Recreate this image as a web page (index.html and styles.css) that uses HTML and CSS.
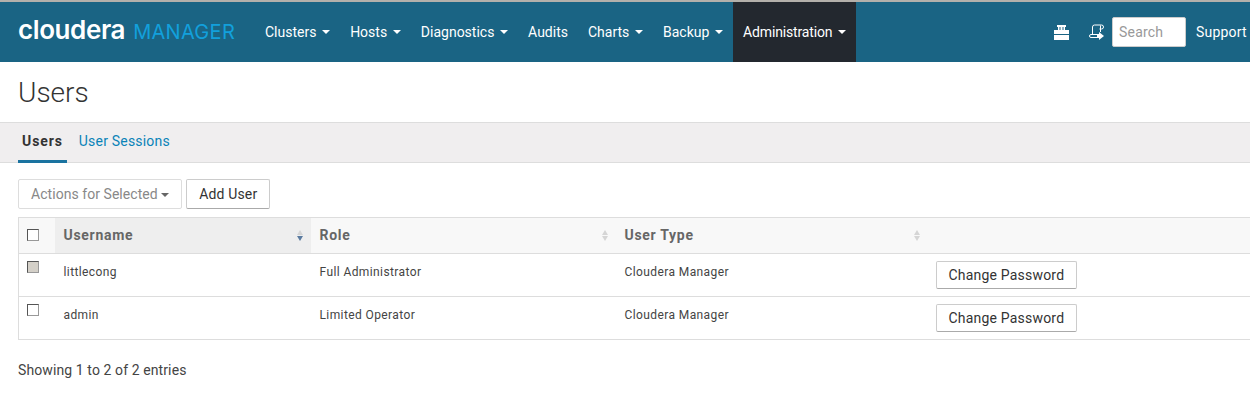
FILE: index.html
```html
<!DOCTYPE html>
<html lang="en">
<head>
    <meta charset="UTF-8">
    <title>Users</title>
    <link rel="stylesheet" href="styles.css">
</head>
<body>

    <nav class="navbar">
        <a class="brand"><span class="brand-name">cloudera</span><span class="brand-product">MANAGER</span></a>
        <ul class="nav-links">
            <li class="nav-item">Clusters <i class="caret"></i></li>
            <li class="nav-item">Hosts <i class="caret"></i></li>
            <li class="nav-item">Diagnostics <i class="caret"></i></li>
            <li class="nav-item">Audits</li>
            <li class="nav-item">Charts <i class="caret"></i></li>
            <li class="nav-item">Backup <i class="caret"></i></li>
            <li class="nav-item active">Administration <i class="caret"></i></li>
        </ul>
        <div class="nav-right">
            <svg class="icon-case" width="15" height="15" viewBox="0 0 15 15">
                <path fill="#fff" d="M3 0h9v2h-1v3h4v4H0V5h4V2H3zM5.500 2v3h1V2zM8.500 2v3h1V2zM0 10h15v5H0z"/>
            </svg>
            <svg class="icon-scroll" width="16" height="16" viewBox="0 0 16 16" fill="none" stroke="#fff">
                <path d="M4.500 10V3a2 2 0 0 1 2-2h7a1.500 1.500 0 0 1 0 4h-2M12.500 1.500V8"/>
                <path d="M3 10.500h7v3H3a1.500 1.500 0 0 1 0-3z"/>
                <path fill="#fff" stroke="none" d="M9 10h2V8l5 4-5 4v-2H9z"/>
            </svg>
            <input class="search" type="text" placeholder="Search">
            <span class="support">Support</span>
        </div>
    </nav>

    <h1 class="page-title">Users</h1>

    <div class="tabs">
        <a class="tab active">Users</a>
        <a class="tab">User Sessions</a>
    </div>

    <div class="content">
        <div class="toolbar">
            <button class="btn disabled">Actions for Selected <i class="caret dark"></i></button>
            <button class="btn">Add User</button>
        </div>

        <table class="users">
            <thead>
                <tr>
                    <th class="col-check"><span class="check"></span></th>
                    <th class="col-name sorted">Username<span class="sort"><i class="up"></i><i class="down on"></i></span></th>
                    <th class="col-role">Role<span class="sort"><i class="up"></i><i class="down"></i></span></th>
                    <th class="col-type">User Type<span class="sort"><i class="up"></i><i class="down"></i></span></th>
                    <th></th>
                </tr>
            </thead>
            <tbody>
                <tr>
                    <td><span class="check locked"></span></td>
                    <td>littlecong</td>
                    <td>Full Administrator</td>
                    <td>Cloudera Manager</td>
                    <td class="col-action"><button class="btn small">Change Password</button></td>
                </tr>
                <tr>
                    <td><span class="check"></span></td>
                    <td>admin</td>
                    <td>Limited Operator</td>
                    <td>Cloudera Manager</td>
                    <td class="col-action"><button class="btn small">Change Password</button></td>
                </tr>
            </tbody>
        </table>

        <p class="info">Showing 1 to 2 of 2 entries</p>
    </div>

</body>
</html>
```

FILE: styles.css
```css
* {
    margin: 0;
    padding: 0;
    box-sizing: border-box;
}

body {
    font-family: Roboto, "Liberation Sans", sans-serif;
    font-size: 13px;
    color: #333;
    background-color: #fff;
    overflow: hidden;
}

/* Barra superior */
.navbar {
    display: flex;
    align-items: stretch;
    height: 62px;
    background-color: #1a6484;
    border-top: 2px solid #b3b0ab;
    color: #fff;
    white-space: nowrap;
}

.brand {
    display: flex;
    align-items: baseline;
    width: 255px;
    padding: 12px 0 0 18px;
}

.brand-name {
    font-family: Inter, sans-serif;
    font-size: 26px;
    font-weight: 600;
    letter-spacing: -0.4px;
}

.brand-product {
    margin-left: 8px;
    font-family: Inter, sans-serif;
    font-size: 20px;
    letter-spacing: 0.3px;
    color: #12a0dc;
}

.nav-links {
    display: flex;
    list-style: none;
}

.nav-item {
    display: flex;
    align-items: center;
    gap: 5.700px;
    padding: 0 10px;
    font-size: 14px;
}

.nav-item.active {
    background-color: #23282f;
    letter-spacing: -0.15px;
}

.caret {
    display: inline-block;
    width: 0;
    height: 0;
    border-top: 4px solid #fff;
    border-left: 4px solid transparent;
    border-right: 4px solid transparent;
}

.caret.dark {
    border-top-color: #666;
    vertical-align: 2px;
}

.nav-right {
    display: flex;
    align-items: center;
    margin-left: auto;
    font-size: 14px;
    letter-spacing: 0.2px;
}

.icon-case {
    margin-right: 19px;
}

.icon-scroll {
    margin-right: 8px;
}

.search {
    width: 74px;
    height: 30px;
    padding: 0 6px;
    margin-right: 10px;
    border: 1px solid #ccc;
    border-radius: 2px;
    font-family: inherit;
    font-size: 14px;
    letter-spacing: 0.2px;
}

.search::placeholder {
    color: #999;
}

.support {
    width: 54px;
    overflow: hidden;
}

.page-title {
    height: 60px;
    padding: 15px 0 0 18px;
    font-size: 28px;
    font-weight: 300;
    line-height: 32px;
}

/* Abas */
.tabs {
    display: flex;
    gap: 12px;
    height: 41px;
    padding-left: 18px;
    background-color: #f0eeef;
    border-top: 1px solid #ddd;
    border-bottom: 1px solid #ddd;
    font-size: 14px;
    letter-spacing: 0.2px;
}

.tab {
    height: 40px;
    padding: 10px 4px 0;
    color: #0a83b8;
}

.tab.active {
    color: #333;
    font-weight: 700;
    letter-spacing: 0.9px;
    border-bottom: 3px solid #1a73a0;
}

.tab + .tab {
    padding-left: 0;
}

.content {
    padding: 16px 0 0 18px;
}

.toolbar {
    display: flex;
    gap: 4px;
    margin-bottom: 8px;
}

.btn {
    height: 30px;
    padding: 0 12px;
    background-color: #fff;
    border: 1px solid #ccc;
    border-bottom-color: #aaa;
    border-radius: 2px;
    font-family: inherit;
    font-size: 14px;
    letter-spacing: 0.15px;
    color: #333;
}

.btn.disabled {
    color: #888;
    letter-spacing: 0.05px;
    border-color: #ddd;
}

.btn.small {
    height: 28px;
    padding-bottom: 1px;
    letter-spacing: 0.2px;
}

/* Tabela */
.users {
    width: 100%;
    border-collapse: collapse;
    table-layout: fixed;
    border: 1px solid #ddd;
    border-right: none;
}

.users th {
    position: relative;
    height: 36px;
    padding: 0 8px 2px 9px;
    background-color: #f8f8f8;
    border-bottom: 1px solid #ddd;
    text-align: left;
    font-size: 14px;
    letter-spacing: 0.7px;
    color: #666;
}

.users th.sorted {
    background-color: #eee;
}

.users td {
    height: 43px;
    padding: 10px 8px 0 9px;
    border-bottom: 1px solid #ddd;
    vertical-align: top;
    font-size: 12px;
    letter-spacing: 0.4px;
    line-height: 16px;
    color: #444;
}

.users th.col-check,
.users td:first-child {
    padding-left: 8px;
}

.col-check {
    width: 36px;
}

.col-name {
    width: 256px;
}

.col-role {
    width: 305px;
}

.col-type {
    width: 305px;
}

.users td.col-action {
    padding-top: 7px;
    padding-left: 15px;
}

.check {
    display: block;
    width: 12px;
    height: 12px;
    background-color: #fff;
    border: 1px solid #999;
    border-top-color: #555;
    border-left-color: #555;
}

td .check {
    margin-top: -3px;
}

.check.locked {
    background-color: #d4d0c8;
}

.sort {
    position: absolute;
    top: 12px;
    right: 8px;
    display: flex;
    flex-direction: column;
    gap: 1px;
}

.col-type .sort {
    right: 1px;
}

.sort i {
    width: 0;
    height: 0;
    border-left: 3.500px solid transparent;
    border-right: 3.500px solid transparent;
}

.sort .up {
    border-bottom: 5px solid #d5d5d5;
}

.sort .down {
    border-top: 5px solid #d5d5d5;
}

.sort .down.on {
    border-top-color: #5b7ba0;
}

.info {
    margin-top: 22px;
    font-size: 14px;
    letter-spacing: 0.1px;
    color: #444;
}
```
